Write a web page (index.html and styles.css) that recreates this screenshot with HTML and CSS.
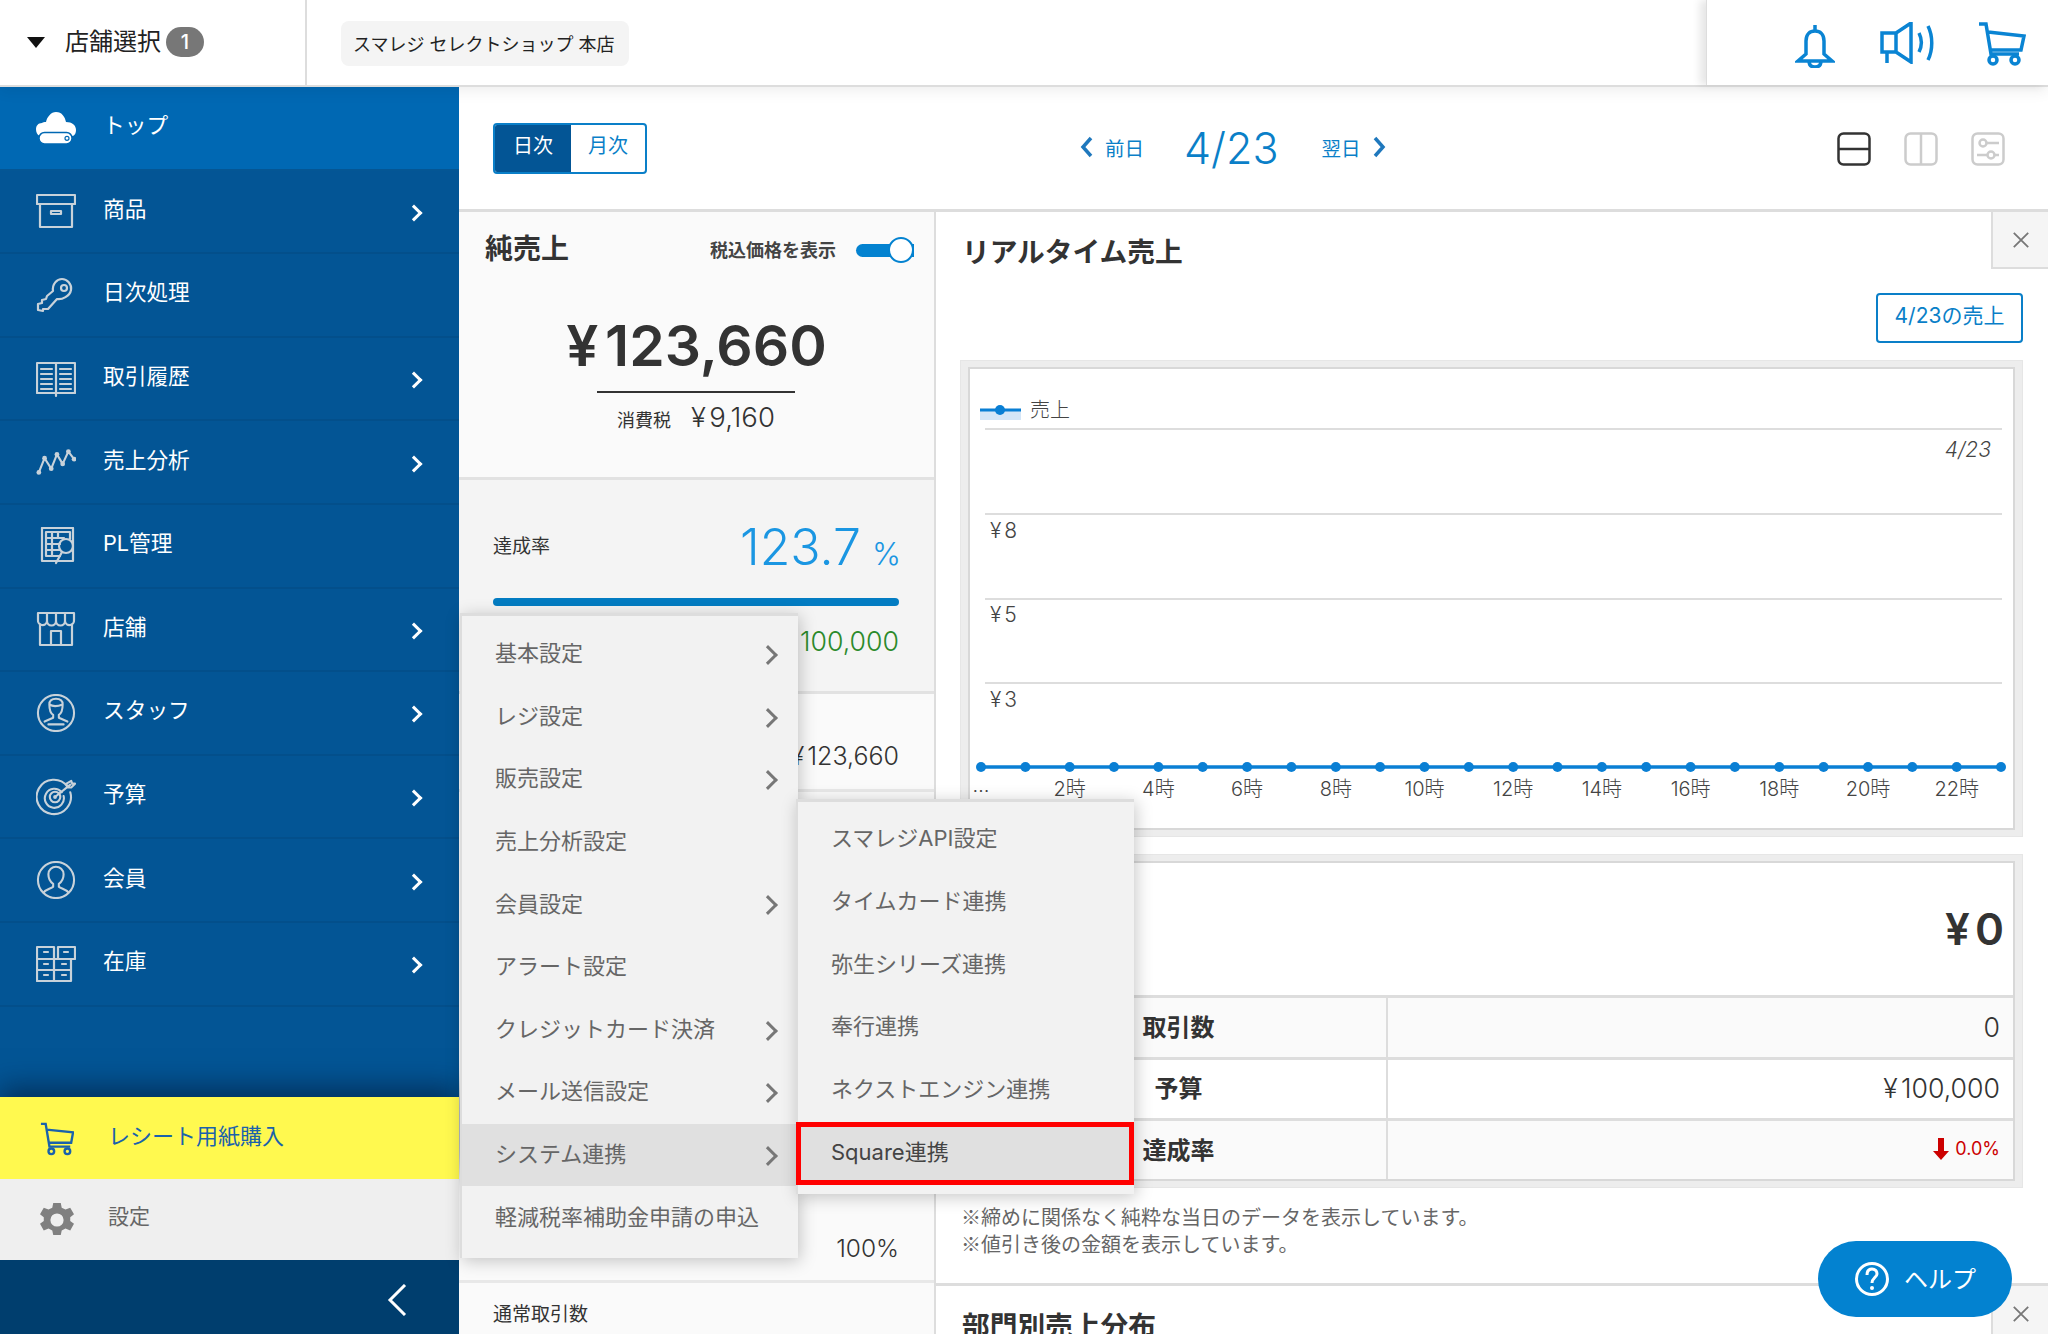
FILE: index.html
```html
<!DOCTYPE html>
<html lang="ja">
<head>
<meta charset="utf-8">
<title>スマレジ</title>
<link rel="stylesheet" href="styles.css">
</head>
<body>
<div class="app">
  <header class="topbar">
    <div class="store-select">
      <span class="caret"></span>
      <span class="store-label">店舗選択</span>
      <span class="badge">1</span>
    </div>
    <div class="store-area">
      <span class="store-chip">スマレジ セレクトショップ 本店</span>
    </div>
    <div class="top-icons">
      <svg class="ti-bell" viewBox="0 0 40 44"><path d="M20 1v6M11 30V17C11 10 15 7 20 7s9 3 9 10v13l8 7H3zM14 37c0 4 2 6 6 6s6-2 6-6"/></svg>
      <svg class="ti-mega" viewBox="0 0 56 42"><path d="M2 11h14v19H2zM16 11 31 1v39L16 30M7 30v11M39 11c3 6 3 13 0 19M48 4c5 10 5 24 0 34"/></svg>
      <svg class="ti-cart" viewBox="0 0 48 44"><path d="M1 2h7l5 30h28M10 10l36 4-3 14H13"/><circle cx="15" cy="38" r="4"/><circle cx="37" cy="38" r="4"/></svg>
    </div>
  </header>

  <div class="body">
    <aside class="sidebar">
      <nav class="nav">
        <a class="nav-item is-top">
          <svg class="nav-ico" viewBox="0 -3 40 34"><path class="solid" d="M4 22C1 21 0 18 0 15c0-3 2-6 6-6 1-1 2-1 4-1 1-5 5-10 10-10 6 0 9 5 10 10 6 0 10 3 10 8 0 3-1 5-3 6z"/><rect class="drive" x="3" y="18.500" width="33" height="11.500" rx="5.500"/><circle class="drive-dot" cx="31" cy="24.300" r="2"/></svg>
          <span class="nav-label">トップ</span>
        </a>
        <a class="nav-item">
          <svg class="nav-ico" viewBox="0 0 40 34"><path d="M1 1h38v9H1zM4 10v23h32V10M15 17h10v3H15z"/></svg>
          <span class="nav-label">商品</span><span class="chev"></span>
        </a>
        <a class="nav-item">
          <svg class="nav-ico" viewBox="0 0 40 34"><path d="M2 32v-6l4-1v-3l4-1 1-3 6-5c-1-7 4-12 9-12s10 5 9 11-9 10-14 9L12 31H7v2z"/><circle cx="28" cy="10" r="3"/></svg>
          <span class="nav-label">日次処理</span>
        </a>
        <a class="nav-item">
          <svg class="nav-ico" viewBox="0 0 40 36"><path d="M1 2h38v30H1zM20 2v33M5 8h11M5 13h11M5 18h11M5 23h11M5 28h11M24 8h11M24 13h11M24 18h11M24 23h11M24 28h11"/></svg>
          <span class="nav-label">取引履歴</span><span class="chev"></span>
        </a>
        <a class="nav-item">
          <svg class="nav-ico" viewBox="0 0 42 28"><path d="M3 25 9 10l7 11 6-15 6 10 6-13 6 8"/><circle class="dot" cx="3" cy="25" r="2.500"/><circle class="dot" cx="9" cy="10" r="2.500"/><circle class="dot" cx="16" cy="21" r="2.500"/><circle class="dot" cx="22" cy="6" r="2.500"/><circle class="dot" cx="28" cy="16" r="2.500"/><circle class="dot" cx="34" cy="3" r="2.500"/><circle class="dot" cx="40" cy="11" r="2.500"/></svg>
          <span class="nav-label">売上分析</span><span class="chev"></span>
        </a>
        <a class="nav-item">
          <svg class="nav-ico" viewBox="0 0 40 38"><path d="M6 1h31v33H6zM10 5h24v7M10 5v24h14M10 11h18M10 17h14M10 23h14M16 5v24M22 5v6"/><circle cx="30" cy="19" r="7"/><path d="m26 25-6 11"/></svg>
          <span class="nav-label">PL管理</span>
        </a>
        <a class="nav-item">
          <svg class="nav-ico" viewBox="0 0 40 34"><path d="M2 1h36v7a4 4 0 0 1-9 1 4 4 0 0 1-9 0 4 4 0 0 1-9 0 4 4 0 0 1-9-1zM11 1v8M20 1v8M29 1v8M4 12v21h32V12M15 33V19h10v14"/></svg>
          <span class="nav-label">店舗</span><span class="chev"></span>
        </a>
        <a class="nav-item">
          <svg class="nav-ico" viewBox="0 0 40 40"><circle cx="20" cy="20" r="19"/><path d="M13 11c0-4 3-6 7-6s7 2 7 6c0 5-1 9-4 11v3l9 4M13 11c3 2 9 2 14 0M13 11c0 5 1 9 4 11v3l-9 4M12 32h16"/></svg>
          <span class="nav-label">スタッフ</span><span class="chev"></span>
        </a>
        <a class="nav-item">
          <svg class="nav-ico" viewBox="0 0 42 38"><path d="M33 8a18 18 0 1 0 3 6M27 14a10 10 0 1 0 2 4"/><circle cx="20" cy="19" r="5.500"/><circle class="dot" cx="20" cy="19" r="2"/><path d="m20 19 16-13M32 5l5-3 1 3 3 0-4 4h-4z"/></svg>
          <span class="nav-label">予算</span><span class="chev"></span>
        </a>
        <a class="nav-item">
          <svg class="nav-ico" viewBox="0 0 40 40"><circle cx="20" cy="20" r="19"/><path d="M7 33c2-3 8-4 10-6v-3c-3-2-5-6-5-10 0-5 4-8 8-8s8 3 8 8c0 4-2 8-5 10v3c2 2 8 3 10 6"/></svg>
          <span class="nav-label">会員</span><span class="chev"></span>
        </a>
        <a class="nav-item">
          <svg class="nav-ico" viewBox="0 0 40 36"><path d="M1 1h17v12H1zM22 1h17v12H22zM1 13h34M1 13v22h34V13M18 13v22M1 24h34M8 6h4M28 6h4M8 18h4M26 18h4M8 29h4M26 29h4"/></svg>
          <span class="nav-label">在庫</span><span class="chev"></span>
        </a>
      </nav>
      <div class="side-fill"></div>
      <a class="side-row is-paper">
        <svg class="side-ico" viewBox="0 0 36 36"><path d="M1 2h5l4 24h22M7 8l28 3-2 11H10"/><circle cx="12" cy="31" r="3"/><circle cx="29" cy="31" r="3"/></svg>
        <span>レシート用紙購入</span>
      </a>
      <a class="side-row is-setting">
        <svg class="side-ico" viewBox="0 0 36 36"><path class="gear" d="M14 0h8l1 5 4 2 5-2 4 7-4 3v4l4 3-4 7-5-2-4 2-1 5h-8l-1-5-4-2-5 2-4-7 4-3v-4L0 12l4-7 5 2 4-2zM18 11a7 7 0 1 0 0 14 7 7 0 0 0 0-14z"/></svg>
        <span>設定</span>
      </a>
      <div class="side-collapse">
        <svg viewBox="0 0 20 32"><path d="M18 1 3 16l15 15"/></svg>
      </div>
    </aside>

    <main class="main">
      <div class="toolbar">
        <div class="seg">
          <span class="seg-on">日次</span>
          <span class="seg-off">月次</span>
        </div>
        <div class="date-nav">
          <a class="date-link"><svg class="date-chev" viewBox="0 0 14 22"><path d="M11 2 3 11l8 9"/></svg>前日</a>
          <span class="date-now">4/23</span>
          <a class="date-link">翌日<svg class="date-chev" viewBox="0 0 14 22"><path d="m3 2 8 9-8 9"/></svg></a>
        </div>
        <div class="views">
          <svg class="view is-on" viewBox="0 0 34 34"><rect x="1.500" y="1.500" width="31" height="31" rx="5"/><path d="M1.500 17h31"/></svg>
          <svg class="view" viewBox="0 0 34 34"><rect x="1.500" y="1.500" width="31" height="31" rx="5"/><path d="M17 1.500v31"/></svg>
          <svg class="view" viewBox="0 0 34 34"><rect x="1.500" y="1.500" width="31" height="31" rx="5"/><circle cx="12" cy="11" r="3.500"/><circle cx="20" cy="23" r="3.500"/><path d="M16 11h12M6 23h10M24 23h4"/></svg>
        </div>
      </div>

      <div class="content">
        <section class="summary">
          <div class="net">
            <div class="net-head">
              <h2 class="net-title">純売上</h2>
              <span class="tax-label">税込価格を表示</span>
              <span class="switch"><span class="switch-knob"></span></span>
            </div>
            <div class="net-amount"><span class="yen">¥</span>123,660</div>
            <div class="net-tax"><small>消費税</small><span><span class="yen">¥</span>9,160</span></div>
          </div>
          <div class="rate">
            <div class="rate-head"><span class="rate-label">達成率</span><span class="rate-val">123.7<small>%</small></span></div>
            <div class="rate-bar"></div>
            <div class="rate-goal"><span class="yen">¥</span>100,000</div>
          </div>
          <div class="sum-row"><span class="sum-val"><span class="yen">¥</span>123,660</span></div>
          <div class="sum-row is-tall"><span class="sum-val">100%</span></div>
          <div class="sum-foot">通常取引数</div>
        </section>

        <section class="detail">
          <button class="close-btn"><svg viewBox="0 0 20 20"><path d="m2 2 16 16M18 2 2 18"/></svg></button>
          <h2 class="detail-title">リアルタイム売上</h2>
          <div class="detail-actions"><a class="outline-btn">4/23の売上</a></div>

          <div class="frame">
            <div class="frame-in chart-box">
              <svg class="chart" viewBox="970 369 1043 459">
                <rect x="980" y="411" width="41" height="9" fill="#d5e6f7"/>
                <path d="M980 410h41" stroke="#0a7fd4" stroke-width="3"/>
                <circle cx="1000" cy="410" r="5" fill="#0a7fd4"/>
                <text x="1030" y="417" class="ct">売上</text>
                <path d="M985 429h1017M985 514h1017M985 599h1017M985 683h1017" stroke="#ddd" stroke-width="2"/>
                <text x="1991" y="457" text-anchor="end" class="ct it">4/23</text>
                <text x="990" y="538" class="ct yt">¥8</text>
                <text x="990" y="622" class="ct yt">¥5</text>
                <text x="990" y="707" class="ct yt">¥3</text>
                <path d="M981 767H2001" stroke="#0a7fd4" stroke-width="3.500"/>
                <g fill="#0a7fd4">
                  <circle cx="981" cy="767" r="5"/><circle cx="1025.400" cy="767" r="5"/><circle cx="1069.700" cy="767" r="5"/><circle cx="1114" cy="767" r="5"/><circle cx="1158.400" cy="767" r="5"/><circle cx="1202.700" cy="767" r="5"/><circle cx="1247.100" cy="767" r="5"/><circle cx="1291.400" cy="767" r="5"/><circle cx="1335.800" cy="767" r="5"/><circle cx="1380.100" cy="767" r="5"/><circle cx="1424.500" cy="767" r="5"/><circle cx="1468.800" cy="767" r="5"/><circle cx="1513.200" cy="767" r="5"/><circle cx="1557.500" cy="767" r="5"/><circle cx="1601.900" cy="767" r="5"/><circle cx="1646.200" cy="767" r="5"/><circle cx="1690.600" cy="767" r="5"/><circle cx="1734.900" cy="767" r="5"/><circle cx="1779.300" cy="767" r="5"/><circle cx="1823.600" cy="767" r="5"/><circle cx="1868" cy="767" r="5"/><circle cx="1912.300" cy="767" r="5"/><circle cx="1956.700" cy="767" r="5"/><circle cx="2001" cy="767" r="5"/>
                </g>
                <g class="ct tick" text-anchor="middle">
                  <text x="981" y="792">…</text><text x="1069.700" y="796">2時</text><text x="1158.400" y="796">4時</text><text x="1247.100" y="796">6時</text><text x="1335.800" y="796">8時</text><text x="1424.500" y="796">10時</text><text x="1513.200" y="796">12時</text><text x="1601.900" y="796">14時</text><text x="1690.600" y="796">16時</text><text x="1779.300" y="796">18時</text><text x="1868" y="796">20時</text><text x="1956.700" y="796">22時</text>
                </g>
              </svg>
            </div>
          </div>

          <div class="frame is-table">
            <div class="frame-in table-box">
              <div class="total"><span class="yen">¥</span>0</div>
              <table class="stats">
                <tr class="alt"><th>取引数</th><td>0</td></tr>
                <tr><th>予算</th><td><span class="yen">¥</span>100,000</td></tr>
                <tr class="alt"><th>達成率</th><td class="down"><svg viewBox="0 0 16 24"><path d="M5 1h6v13h5l-8 9-8-9h5z"/></svg>0.0%</td></tr>
              </table>
            </div>
          </div>

          <p class="notes">※締めに関係なく純粋な当日のデータを表示しています。<br>※値引き後の金額を表示しています。</p>

          <div class="next-panel">
            <button class="close-btn"><svg viewBox="0 0 20 20"><path d="m2 2 16 16M18 2 2 18"/></svg></button>
            <h2 class="detail-title">部門別売上分布</h2>
          </div>
        </section>
      </div>
    </main>
  </div>

  <ul class="menu menu-main">
    <li class="menu-item has-sub">基本設定</li>
    <li class="menu-item has-sub">レジ設定</li>
    <li class="menu-item has-sub">販売設定</li>
    <li class="menu-item">売上分析設定</li>
    <li class="menu-item has-sub">会員設定</li>
    <li class="menu-item">アラート設定</li>
    <li class="menu-item has-sub">クレジットカード決済</li>
    <li class="menu-item has-sub">メール送信設定</li>
    <li class="menu-item has-sub is-active">システム連携</li>
    <li class="menu-item">軽減税率補助金申請の申込</li>
  </ul>
  <ul class="menu menu-sub">
    <li class="menu-item">スマレジAPI設定</li>
    <li class="menu-item">タイムカード連携</li>
    <li class="menu-item">弥生シリーズ連携</li>
    <li class="menu-item">奉行連携</li>
    <li class="menu-item">ネクストエンジン連携</li>
    <li class="menu-item is-marked">Square連携</li>
  </ul>

  <a class="help">
    <svg viewBox="0 0 36 36"><circle cx="18" cy="18" r="15.500"/><path class="q" d="M13 14c0-4 2-6 5-6s5 2 5 5-5 4-5 9"/><circle class="qd" cx="18" cy="27" r="2"/></svg>
    <span>ヘルプ</span>
  </a>
</div>
</body>
</html>
```

FILE: styles.css
```css
* { box-sizing: border-box; }
html, body { margin: 0; height: 100%; }
body {
  font-family: "Inter", "Noto Sans CJK JP", sans-serif;
  color: #333;
  background: #fff;
  overflow: hidden;
}
a { color: inherit; text-decoration: none; }
h2, p, ul { margin: 0; padding: 0; }
svg { display: block; fill: none; stroke: currentColor; }
.yen { margin-right: .12em; }

.app { position: relative; width: 2048px; height: 1334px; overflow: hidden; display: flex; flex-direction: column; }

/* header */
.topbar {
  position: relative;
  z-index: 3;
  flex: none;
  display: flex;
  height: 87px;
  background: #fff;
  border-bottom: 2px solid #ddd;
  box-shadow: 0 4px 14px rgba(0, 0, 0, .07);
}
.store-select {
  width: 307px;
  display: flex;
  align-items: center;
  padding: 0 0 1px 27px;
  border-right: 2px solid #ddd;
  color: #222;
}
.caret { width: 0; height: 0; border-left: 9px solid transparent; border-right: 9px solid transparent; border-top: 11px solid #111; margin-right: 20px; }
.store-label { font-size: 24px; line-height: 1; }
.badge {
  width: 38px; height: 30px; margin-left: 5px; border-radius: 15px;
  background: #777; color: #fff; font-size: 20px; font-weight: 500;
  display: flex; align-items: center; justify-content: center;
}
.store-area { flex: 1; display: flex; align-items: center; padding: 1px 0 0 34px; }
.store-chip { height: 45px; padding: 0 12px; background: #f4f4f4; border-radius: 8px; font-size: 18px; color: #222; display: flex; align-items: center; width: 288px; white-space: nowrap; }
.top-icons {
  width: 342px;
  display: flex;
  align-items: flex-start;
  border-left: 1px solid #ddd;
  box-shadow: -6px 0 8px rgba(0, 0, 0, .1);
  color: #0a84d3;
  padding: 22px 0 0 88px;
}
.top-icons svg { stroke-width: 3.500; }
.ti-bell { width: 40px; height: 44px; margin-top: 2px; }
.ti-mega { width: 56px; height: 42px; margin-left: 45px; }
.ti-cart { width: 50px; height: 44px; margin-left: 41px; }

/* sidebar */
.body { flex: 1; display: flex; min-height: 0; }
.sidebar {
  flex: none; width: 459px; display: flex; flex-direction: column;
  background: #035595; color: #fff;
}
.nav { flex: none; }
.nav-item {
  height: 83.600px;
  display: flex;
  align-items: center;
  padding: 0 39px 0 36px;
  border-bottom: 2px solid #034f8b;
}
.nav-item.is-top { background: #0068b3; border-bottom-color: #045694; }
.nav-ico { width: 40px; height: 38px; flex: none; stroke: #c8d2da; stroke-width: 2.200; stroke-linejoin: round; stroke-linecap: round; }
.nav-ico .dot { fill: #c8d2da; stroke: none; }
.nav-ico .solid { fill: #fff; stroke: none; }
.nav-ico .drive { fill: #fff; stroke: #0068b3; stroke-width: 1.500; }
.nav-ico .drive-dot { fill: #fff; stroke: #0068b3; stroke-width: 1.200; }
.nav-label { margin-left: 27px; font-size: 21.700px; padding-bottom: 8px; letter-spacing: 0; }
.chev {
  margin-left: auto; margin-top: 3px; width: 12px; height: 12px;
  border-top: 3.500px solid #fff; border-right: 3.500px solid #fff;
  transform: rotate(45deg);
}
.side-fill { flex: 1; }
.side-row {
  flex: none; display: flex; align-items: center; padding: 0 0 0 40px;
  font-size: 22px; position: relative;
}
.side-row span { margin-left: 34px; padding-bottom: 9px; }
.side-ico { width: 34px; height: 34px; flex: none; stroke-width: 2.500; }
.is-paper { height: 82px; background: #fff94f; color: #1a62ab; box-shadow: 0 -10px 26px rgba(0, 25, 55, .6); z-index: 1; }
.is-paper .side-ico { margin-top: 2px; }
.is-setting { height: 81px; background: #efefef; color: #666; z-index: 1; font-size: 21px; }
.gear { fill: #808080; stroke: none; fill-rule: evenodd; }
.side-collapse { flex: none; height: 74px; background: #003e6e; display: flex; align-items: center; justify-content: flex-end; padding: 0 52px 0 0; }
.side-collapse svg { width: 20px; height: 32px; margin-top: 6px; stroke: #fff; stroke-width: 3; }

/* main */
.main { flex: 1; min-width: 0; display: flex; flex-direction: column; }
.toolbar {
  flex: none; height: 125px; border-bottom: 3px solid #ddd;
  display: flex; align-items: center; position: relative;
  padding: 0 43px 0 34px;
}
.seg { display: flex; width: 154px; height: 51px; border: 2px solid #0a7fc8; border-radius: 4px; overflow: hidden; font-size: 20px; margin-top: 1px; }
.seg-on { width: 76px; background: #035595; color: #fff; display: flex; align-items: center; justify-content: center; padding-bottom: 8px; }
.seg-off { flex: 1; color: #0a7fc8; display: flex; align-items: center; justify-content: center; padding-bottom: 8px; }
.date-nav { display: flex; align-items: center; margin-left: 433px; color: #0a7fc8; }
.date-link { display: flex; align-items: center; font-size: 19.500px; gap: 11px; padding-bottom: 2px; }
.date-chev { width: 14px; height: 22px; stroke: #1f78bd; stroke-width: 3.500; }
.date-now { font-size: 43px; font-weight: 300; margin: 0 43px 0 40px; line-height: 1; }
.views { margin-left: auto; display: flex; gap: 33px; color: #ccc; margin-top: 1px; }
.view { width: 34px; height: 34px; stroke-width: 2.500; }
.view.is-on { color: #333; }

.content { flex: 1; display: flex; min-height: 0; }
.summary { flex: none; width: 477px; border-right: 2px solid #ddd; background: #fafafa; display: flex; flex-direction: column; }
.net { flex: none; height: 268px; border-bottom: 3px solid #e2e2e2; padding: 0 0 0 26px; }
.net-head { display: flex; align-items: center; height: 76px; padding: 0 20px 0 0; }
.net-title { font-size: 28px; font-weight: 700; color: #333; flex: 1; padding-bottom: 6px; }
.tax-label { font-size: 18px; font-weight: 700; color: #444; margin-right: 20px; padding-bottom: 3px; }
.switch { position: relative; width: 58px; height: 13px; background: #0382d0; border-radius: 6.500px 0 0 6.500px; }
.switch-knob { position: absolute; right: 0; top: -7px; width: 26px; height: 26px; background: #fff; border: 2px solid #0382d0; border-radius: 50%; }
.net-amount { margin: 23px 0 0 -26px; text-align: center; font-size: 57px; line-height: 70px; font-weight: 600; color: #333; }
.net-tax {
  width: 198px; margin: 10px 0 0 112px; border-top: 2px solid #333;
  display: flex; align-items: center; justify-content: center; gap: 20px; height: 50px;
}
.net-tax small { font-size: 18px; margin-top: 3px; }
.net-tax span { font-size: 27.500px; font-weight: 300; }
.rate { flex: none; height: 214px; background: #f4f4f4; border-bottom: 3px solid #e2e2e2; padding: 0 35px 0 34px; }
.rate-head { display: flex; align-items: flex-end; justify-content: space-between; height: 98px; }
.rate-label { font-size: 19px; padding-bottom: 20px; }
.rate-val { font-size: 50px; font-weight: 300; color: #1a96e2; line-height: 1; padding-bottom: 6px; }
.rate-val small { font-size: 31px; margin: 0 -2px 0 11px; }
.rate-bar { height: 8px; border-radius: 4px; background: #037cc2; margin-top: 20px; }
.rate-goal { text-align: right; margin-top: 19px; font-size: 26.700px; font-weight: 300; color: #2b8a2b; }
.sum-row { flex: none; height: 98px; border-bottom: 3px solid #e8e8e8; padding: 47px 35px 0 0; text-align: right; font-size: 25px; font-weight: 300; }
.sum-row.is-tall { height: 491px; padding-top: 441px; font-size: 24.500px; }
.sum-foot { padding: 16px 0 0 34px; font-size: 19px; }

.detail { flex: 1; min-width: 0; position: relative; background: #fff; padding: 0 25px 0 24px; }
.close-btn {
  position: absolute; right: 0; top: 0; width: 57px; height: 57px; padding: 0;
  background: #f5f5f5; border: 0; border-left: 2px solid #ddd; border-bottom: 2px solid #ddd;
  display: flex; align-items: center; justify-content: center; color: #777;
}
.close-btn svg { width: 18px; height: 18px; stroke-width: 2; }
.detail-title { font-size: 27.700px; font-weight: 700; color: #333; line-height: 40px; padding: 20px 0 0 2px; height: 60px; }
.detail-actions { display: flex; justify-content: flex-end; margin-top: 21px; }
.outline-btn { width: 147px; height: 50px; border: 2px solid #0a7fc8; border-radius: 4px; color: #0a7fc8; font-size: 21px; display: flex; align-items: center; justify-content: center; padding-bottom: 8px; }
.frame { border: solid #ededed; border-width: 7px 8px; outline: 1px solid #e6e6e6; outline-offset: -1px; margin-top: 17px; }
.frame-in { border: 2px solid #d8d8d8; }
.chart-box { height: 463px; }
.chart { width: 100%; height: 100%; stroke: none; }
.ct { font-size: 20px; fill: #444; stroke: none; font-weight: 300; font-family: "Inter", "Noto Sans CJK JP", sans-serif; }
.yt { font-size: 21px; letter-spacing: 3px; }
.it { font-style: italic; font-size: 21px; }
.frame.is-table { margin-top: 17px; }
.table-box { height: 320px; overflow: hidden; }
.total { height: 135px; background: #fff; text-align: right; padding: 40px 9px 0 0; font-size: 44px; font-weight: 600; line-height: 52px; border-bottom: 3px solid #ddd; }
.stats { width: 100%; border-collapse: collapse; table-layout: fixed; }
.stats tr { height: 60.500px; border-bottom: 3px solid #ddd; }
.stats tr:last-child { border-bottom: 0; }
.stats .alt { background: #fafafa; }
.stats th { width: 417px; font-size: 24px; font-weight: 700; border-right: 2px solid #ddd; padding: 0 0 4px 1px; }
.stats td { text-align: right; font-size: 26.700px; font-weight: 300; padding: 0 13px 2px 0; }
.stats td.down { color: #c00; font-size: 18px; font-weight: 400; }
.down svg { display: inline-block; width: 16px; height: 24px; fill: #c00; stroke: none; vertical-align: -6px; margin-right: 6px; }
.notes { margin-top: 15px; padding-left: 1px; font-family: "Noto Sans CJK JP", sans-serif; font-size: 20px; line-height: 27px; color: #666; }
.next-panel { position: absolute; left: 0; right: 0; top: 1071px; border-top: 3px solid #ddd; padding: 0 25px 0 24px; height: 100px; }

/* menus */
.menu { position: absolute; z-index: 5; list-style: none; background: #f2f2f2; border-top: 3px solid #ddd; border-left: 2px solid #ddd; box-shadow: 2px 3px 16px rgba(0, 0, 0, .22); width: 338px; }
.menu-main { left: 460px; top: 613px; height: 645px; padding-top: 7px; }
.menu-sub { left: 796px; top: 799px; height: 395px; padding-top: 6px; z-index: 6; }
.menu-item { height: 62.600px; display: flex; align-items: center; padding: 0 18px 6px 33px; font-size: 22px; color: #666; position: relative; white-space: nowrap; }
.menu-sub .menu-item { height: 62.700px; }
.has-sub::after { content: ""; position: absolute; right: 23px; top: 25px; width: 11px; height: 11px; border-top: 3.500px solid #777; border-right: 3.500px solid #777; transform: rotate(45deg); }
.is-active { background: #e0e0e0; }
.menu-sub .is-marked { background: #e0e0e0; margin: 1px 0 0 -2px; border: 5px solid #f00; padding: 0 18px 8px 30px; color: #444; height: 63px; }

/* help */
.help { position: absolute; z-index: 7; left: 1818px; top: 1241px; width: 194px; height: 76px; border-radius: 38px; background: #0382d0; color: #fff; display: flex; align-items: center; padding-left: 36px; gap: 14px; font-size: 24px; }
.help svg { width: 36px; height: 36px; stroke-width: 3; }
.help .qd { fill: #fff; stroke: none; }
.help span { padding-bottom: 4px; }
```
